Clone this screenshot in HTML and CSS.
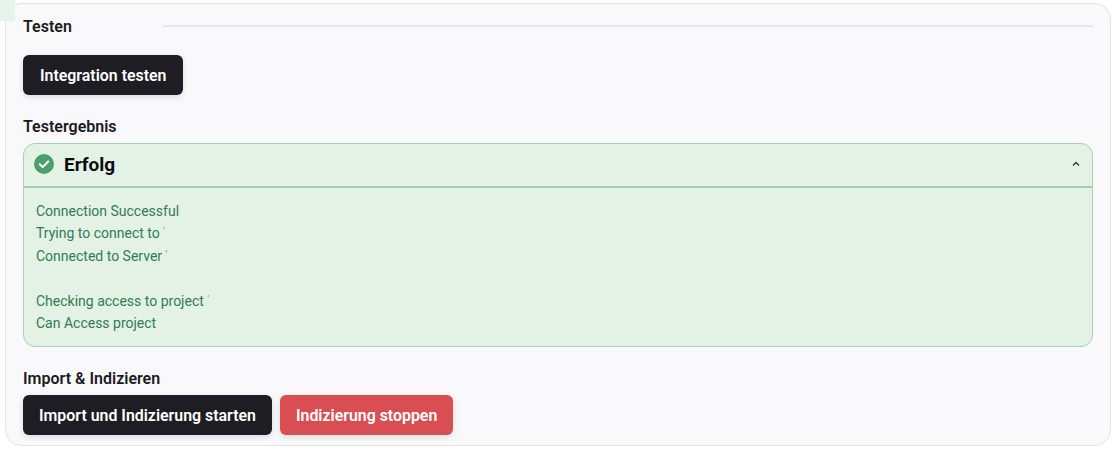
FILE: index.html
```html
<!DOCTYPE html>
<html lang="de">
<head>
    <meta charset="UTF-8">
    <meta name="viewport" content="width=device-width, initial-scale=1.0">
    <title>Integration</title>
    <link rel="stylesheet" href="styles.css">
</head>
<body>
    <div class="corner-tab"></div>
    <div class="card">
        <div class="section-head">
            <h3>Testen</h3>
            <div class="divider"></div>
        </div>
        <button class="btn btn-dark btn-test">Integration testen</button>

        <h3 class="result-title">Testergebnis</h3>
        <div class="alert">
            <div class="alert-head">
                <div class="alert-title">
                    <svg class="icon-check" viewBox="0 0 20 20">
                        <circle cx="10" cy="10" r="10" fill="#4a9f6c"/>
                        <path d="M5.8 10.3l2.9 2.8 5.5-5.6" fill="none" stroke="#fff" stroke-width="2" stroke-linecap="round" stroke-linejoin="round"/>
                    </svg>
                    <span>Erfolg</span>
                </div>
                <svg class="icon-chevron" viewBox="0 0 8 6">
                    <path d="M1 4.5L4 1.5l3 3" fill="none" stroke="#2f3a33" stroke-width="1.3"/>
                </svg>
            </div>
            <div class="alert-body">
                <p>Connection Successful</p>
                <p>Trying to connect to <span class="redacted">'</span></p>
                <p>Connected to Server <span class="redacted">'</span></p>
                <p>&nbsp;</p>
                <p>Checking access to project <span class="redacted">'</span></p>
                <p>Can Access project</p>
            </div>
        </div>

        <h3 class="import-title">Import &amp; Indizieren</h3>
        <div class="actions">
            <button class="btn btn-dark">Import und Indizierung starten</button>
            <button class="btn btn-red">Indizierung stoppen</button>
        </div>
    </div>
</body>
</html>
```

FILE: styles.css
```css
* {
    box-sizing: border-box;
}

body {
    margin: 0;
    padding: 3px 6px 6px 5px;
    background-color: white;
    font-family: Roboto, "Liberation Sans", sans-serif;
    color: #1c1b22;
}

.corner-tab {
    position: absolute;
    z-index: 1;
    top: 0;
    left: 0;
    width: 15px;
    height: 21px;
    background-color: #e5f3e8;
}

.card {
    position: relative;
    height: 443px;
    padding: 13px 17px 0 17px;
    background-color: #f9f9fc;
    border: 1px solid #e3e3e8;
    border-radius: 16px;
}

h3 {
    margin: 0;
    font-size: 16px;
    font-weight: 600;
    line-height: 20px;
}

.section-head {
    display: flex;
    align-items: center;
    gap: 91px;
}

.divider {
    flex: 1;
    height: 2px;
    margin-bottom: 2px;
    background-color: #e6e6ea;
}

.btn {
    height: 40px;
    padding: 0 15px;
    border: 1px solid transparent;
    border-radius: 6px;
    font-family: inherit;
    font-size: 15.9px;
    font-weight: 600;
    color: white;
    box-shadow: 0 2px 6px rgba(0, 0, 0, 0.12);
    cursor: pointer;
}

.btn-dark {
    background-color: #1e1d24;
}

.btn-red {
    background-color: #d94e52;
}

.btn-test {
    display: block;
    margin-top: 18px;
    padding: 0 16px;
}

.result-title {
    margin-top: 22px;
}

.alert {
    margin-top: 6px;
    height: 204px;
    background-color: #e4f2e5;
    border: 1px solid #a5d3ae;
    border-radius: 12px;
}

.alert-head {
    display: flex;
    justify-content: space-between;
    align-items: center;
    height: 44px;
    padding: 0 12px 2px 10px;
    border-bottom: 2px solid #a0d0ac;
}

.alert-title {
    display: flex;
    align-items: center;
    gap: 10px;
    font-size: 19px;
    font-weight: 700;
    color: #0b0b0f;
}

.icon-check {
    width: 20px;
    height: 20px;
}

.icon-chevron {
    width: 8px;
    height: 6px;
}

.alert-body {
    padding: 12px 12px 0;
    font-size: 14px;
    line-height: 22.4px;
    color: #2e7d53;
}

.alert-body p {
    margin: 0;
}

.redacted {
    font-size: 10px;
    line-height: 0;
    vertical-align: 3px;
    color: #5d9a78;
}

.import-title {
    margin-top: 22px;
}

.actions {
    display: flex;
    gap: 8px;
    margin-top: 6px;
}
```
